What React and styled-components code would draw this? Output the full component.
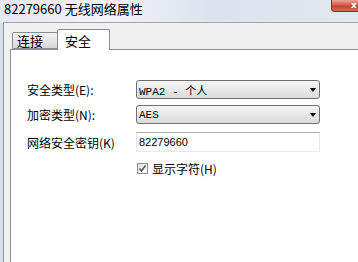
import React from 'react'
import styled, { createGlobalStyle } from 'styled-components'

const Global = createGlobalStyle`
  html, body {
    margin: 0;
    padding: 0;
  }
  body {
    width: 358px;
    height: 262px;
    overflow: hidden;
    font-family: "Noto Sans CJK SC", "Liberation Sans", sans-serif;
    color: #000;
  }
`

const Window = styled.div`
  width: 358px;
  height: 262px;
  display: flex;
  flex-direction: column;
  overflow: hidden;
  background: linear-gradient(90deg, #d9dfe8 0%, #e6eaf1 40%, #dfe4ee 100%);
`

const TitleBar = styled.div`
  height: 22px;
  flex: none;
  display: flex;
  align-items: flex-start;
  padding-left: 4px;
  background: linear-gradient(90deg, #e4e8ef 0%, #f1f3f7 30%, #dce2ee 60%, #e3e8f1 100%);
`

const Title = styled.span`
  font-size: 13px;
  line-height: 17px;
  white-space: nowrap;
`

const CloseButton = styled.div`
  flex: none;
  margin-left: auto;
  margin-right: -19px;
  width: 46px;
  height: 12px;
  box-sizing: border-box;
  border: 1px solid #7b2f25;
  border-top: none;
  border-radius: 0 0 4px 4px;
  background: linear-gradient(180deg, #e8a595 0%, #d4604c 45%, #c3422f 55%, #d46c58 100%);
  color: #fff;
  font-family: "DejaVu Sans", sans-serif;
  font-size: 9px;
  font-weight: bold;
  line-height: 11px;
  text-align: center;
`

const Body = styled.div`
  flex: 1;
  margin-left: 3px;
  border-left: 1px solid #8f9398;
  border-top: 1px solid #a3a7ad;
  background: #f0f0f0;
  padding-left: 6px;
  display: flex;
  flex-direction: column;
`

const TabStrip = styled.div`
  height: 27px;
  flex: none;
  display: flex;
  align-items: flex-end;
  padding-left: 2px;
  margin-bottom: -1px;
  position: relative;
  z-index: 1;
`

const Tab = styled.div`
  box-sizing: border-box;
  width: ${p => (p.$active ? '53px' : '46px')};
  height: ${p => (p.$active ? '21px' : '17px')};
  margin-bottom: ${p => (p.$active ? '0' : '1px')};
  margin-left: ${p => (p.$active ? '-1px' : '0')};
  padding-left: ${p => (p.$active ? '7px' : '4px')};
  border: 1px solid #898c95;
  border-bottom: ${p => (p.$active ? 'none' : '1px solid #898c95')};
  border-radius: 2px 2px 0 0;
  background: ${p => (p.$active ? '#fff' : 'linear-gradient(180deg, #f2f2f2 0%, #e6e6e6 50%, #d6d6d6 100%)')};
  font-size: 13px;
  display: flex;
  align-items: center;
`

const Panel = styled.div`
  flex: 1;
  background: #fff;
  border-top: 1px solid #898c95;
  border-left: 1px solid #898c95;
  padding: 30px 0 0 16px;
  display: flex;
  flex-direction: column;
`

const Row = styled.div`
  display: flex;
  align-items: center;
  height: ${p => p.$h}px;
  margin-top: ${p => p.$top || 0}px;
`

const Label = styled.div`
  width: 109px;
  flex: none;
  font-size: 12px;
  white-space: nowrap;
`

const Select = styled.div`
  width: 184px;
  height: 19px;
  box-sizing: border-box;
  border: 1px solid #707070;
  border-radius: 3px;
  background: linear-gradient(180deg, #f5f5f5 0%, #e9e9e9 50%, #dadada 100%);
  padding: 0 3px 0 2px;
  display: flex;
  align-items: center;
  font-family: "Liberation Mono", "Noto Sans CJK SC", monospace;
  font-size: 11px;
`

const Arrow = styled.span`
  margin-left: auto;
  width: 0;
  height: 0;
  border-left: 3.5px solid transparent;
  border-right: 3.5px solid transparent;
  border-top: 4px solid #000;
`

const Input = styled.div`
  width: 184px;
  height: 20px;
  box-sizing: border-box;
  border: 1px solid #e3e9ef;
  border-top-color: #abadb3;
  border-left-color: #e2e3ea;
  padding-left: 2px;
  display: flex;
  align-items: center;
  font-family: "Liberation Sans", sans-serif;
  font-size: 11px;
`

const Check = styled.div`
  width: 11px;
  height: 11px;
  box-sizing: border-box;
  margin-left: 1px;
  border: 1px solid #8e8f8f;
  background: linear-gradient(135deg, #dcdcdc 0%, #f4f4f4 60%, #fff 100%);
  display: flex;
  align-items: center;
  justify-content: center;
`

const CheckText = styled.span`
  margin-left: 4px;
  font-size: 12px;
`

export default function App() {
  return (
    <Window>
      <Global />
      <TitleBar>
        <Title>82279660 无线网络属性</Title>
        <CloseButton>x</CloseButton>
      </TitleBar>
      <Body>
        <TabStrip>
          <Tab>连接</Tab>
          <Tab $active>安全</Tab>
        </TabStrip>
        <Panel>
          <Row $h={19}>
            <Label>安全类型(E):</Label>
            <Select>
              WPA2 - 个人
              <Arrow />
            </Select>
          </Row>
          <Row $h={19} $top={6}>
            <Label>加密类型(N):</Label>
            <Select>
              AES
              <Arrow />
            </Select>
          </Row>
          <Row $h={20} $top={8}>
            <Label>网络安全密钥(K)</Label>
            <Input>82279660</Input>
          </Row>
          <Row $h={14} $top={9}>
            <Label />
            <Check>
              <svg width="9" height="9" viewBox="0 0 9 9">
                <path d="M1.5 4.5 L3.5 7 L7.5 1.5" fill="none" stroke="#4d5566" strokeWidth="1.6" />
              </svg>
            </Check>
            <CheckText>显示字符(H)</CheckText>
          </Row>
        </Panel>
      </Body>
    </Window>
  )
}
